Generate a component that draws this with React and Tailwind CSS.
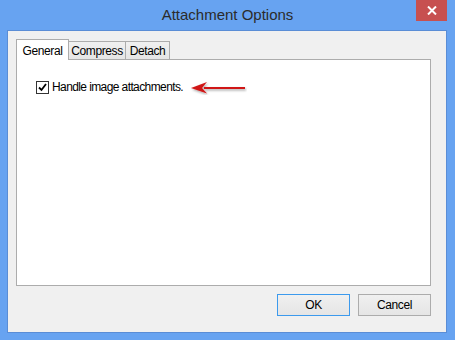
export default function App() {
  const font = { fontFamily: '"Liberation Sans", Arial, sans-serif' };

  return (
    <div className="w-[455px] h-[340px] bg-[#67a3f1] flex flex-col" style={font}>
      {/* title bar */}
      <div className="h-[30px] flex items-start shrink-0">
        <div className="w-[39px] shrink-0"></div>
        <div className="flex-1 text-center text-[15px] leading-[20px] pt-[5px] text-[#2b2b2b]">
          Attachment Options
        </div>
        <button className="w-[31px] h-[21px] mr-[8px] bg-[#c75050] flex items-center justify-center">
          <svg width="10" height="9" viewBox="0 0 10 9">
            <path d="M1 0.5 L9 8.5 M9 0.5 L1 8.5" stroke="white" strokeWidth="2" />
          </svg>
        </button>
      </div>

      {/* client area */}
      <div className="flex-1 ml-[7px] mr-[8px] mb-[7px] border border-[#5a8dd6] bg-[#f0f0f0] flex flex-col pl-2 pt-2 pr-[15px] pb-4 tracking-[-0.4px]">
        {/* tabs */}
        <div className="flex items-end h-[20px] relative z-10 text-[12px] text-black">
          <div className="w-[53px] h-[21px] -mb-px bg-white border border-b-0 border-[#acacac] flex justify-center pt-[4px] leading-[14px]">
            General
          </div>
          <div className="w-[57px] h-[18px] border border-l-0 border-b-0 border-[#acacac] bg-gradient-to-b from-[#f0f0f0] to-[#e5e5e5] flex justify-center pt-[2px] leading-[14px]">
            Compress
          </div>
          <div className="w-[44px] h-[18px] border border-l-0 border-b-0 border-[#acacac] bg-gradient-to-b from-[#f0f0f0] to-[#e5e5e5] flex justify-center pt-[2px] leading-[14px]">
            Detach
          </div>
        </div>

        {/* panel */}
        <div className="h-[227px] border border-[#acacac] bg-white pl-[19px] pt-[21px]">
          <div className="flex items-center h-[13px]">
            <div className="w-[13px] h-[13px] border border-[#333] bg-white flex items-center justify-center shrink-0">
              <svg width="9" height="9" viewBox="0 0 9 9">
                <path d="M1 4.5 L3.5 7 L8 1" stroke="black" strokeWidth="1.8" fill="none" />
              </svg>
            </div>
            <span className="ml-[3px] text-[12px] leading-[13px] text-black tracking-[-0.6px]">Handle image attachments.</span>
            <svg className="ml-[7px]" width="57" height="14" viewBox="0 0 57 14">
              <defs>
                <filter id="sh" x="-10%" y="-30%" width="130%" height="180%">
                  <feDropShadow dx="1" dy="1.5" stdDeviation="0.8" floodColor="#000" floodOpacity="0.35" />
                </filter>
              </defs>
              <g filter="url(#sh)">
                <path d="M14 6 L55 6 L55 8 L14 8 Z" fill="#d01818" />
                <path d="M1 7 L17 1 L12 7 L17 12.5 Z" fill="#d01818" />
              </g>
            </svg>
          </div>
        </div>

        {/* buttons */}
        <div className="flex justify-end gap-2 mt-2 text-[12px] text-black">
          <button className="w-[73px] h-[22px] border border-[#3c9aed] bg-gradient-to-b from-[#f0f0f0] to-[#e5e5e5] leading-[20px]">
            OK
          </button>
          <button className="w-[73px] h-[22px] border border-[#acacac] bg-gradient-to-b from-[#f0f0f0] to-[#e5e5e5] leading-[20px]">
            Cancel
          </button>
        </div>
      </div>
    </div>
  );
}
